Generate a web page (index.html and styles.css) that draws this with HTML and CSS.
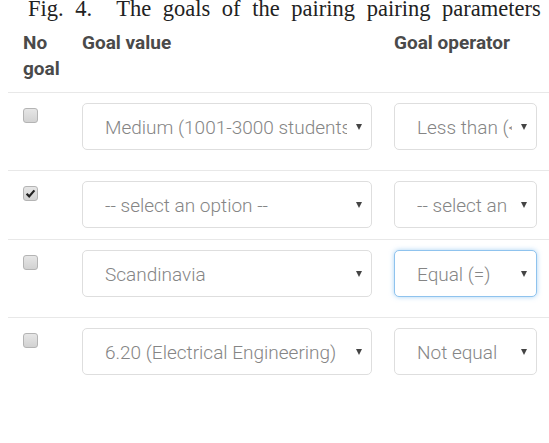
FILE: index.html
```html
<!DOCTYPE html>
<html lang="en">
<head>
    <meta charset="UTF-8">
    <meta name="viewport" content="width=device-width, initial-scale=1.0">
    <title>Goals</title>
    <link rel="stylesheet" href="styles.css">
</head>
<body>
    <p class="caption"><span class="fig">Fig. 4.</span>The goals of the pairing pairing parameters</p>

    <div class="goals">
        <div class="goal-row head">
            <div>No goal</div>
            <div>Goal value</div>
            <div>Goal operator</div>
        </div>

        <div class="goal-row spaced">
            <span class="check"></span>
            <div class="select"><span class="value">Medium (1001-3000 students)</span><span class="arrow"></span></div>
            <div class="select"><span class="value">Less than (&lt;)</span><span class="arrow"></span></div>
        </div>

        <div class="goal-row">
            <span class="check checked">
                <svg viewBox="0 0 15 15" width="15" height="15"><path d="M3.6 7.8 L6.2 10.4 L11.4 4.4" fill="none" stroke="#222" stroke-width="2.2"/></svg>
            </span>
            <div class="select"><span class="value">-- select an option --</span><span class="arrow"></span></div>
            <div class="select"><span class="value">-- select an option --</span><span class="arrow"></span></div>
        </div>

        <div class="goal-row spaced">
            <span class="check"></span>
            <div class="select"><span class="value">Scandinavia</span><span class="arrow"></span></div>
            <div class="select focus"><span class="value">Equal (=)</span><span class="arrow"></span></div>
        </div>

        <div class="goal-row">
            <span class="check"></span>
            <div class="select"><span class="value">6.20 (Electrical Engineering)</span><span class="arrow"></span></div>
            <div class="select"><span class="value">Not equal</span><span class="arrow"></span></div>
        </div>
    </div>
</body>
</html>
```

FILE: styles.css
```css
body {
    margin: 0 0 0 8px;
    background-color: #fff;
    overflow: hidden;
}

.caption {
    margin: 0 0 0 20px;
    font-family: 'Liberation Serif', 'Times New Roman', serif;
    font-size: 22.5px;
    line-height: 18px;
    word-spacing: 6px;
    color: #222;
    white-space: nowrap;
}

.fig {
    margin-right: 24px;
}

.goals {
    margin-top: 12px;
    font-family: Roboto, 'Liberation Sans', sans-serif;
}

.goal-row {
    display: grid;
    grid-template-columns: 37px 290px 143px;
    column-gap: 22px;
    align-items: start;
    padding: 10px 0 11px 15px;
    border-top: 1px solid #e8e8e8;
}

.goal-row.spaced {
    padding-bottom: 20px;
}

.goal-row.head {
    padding-top: 0;
    padding-bottom: 10px;
    border-top: none;
    font-size: 19px;
    font-weight: bold;
    line-height: 26px;
    color: #4a4a4a;
}

.check {
    display: block;
    width: 15px;
    height: 15px;
    margin-top: 5px;
    box-sizing: border-box;
    border: 1px solid #b4b4b4;
    border-radius: 3px;
    background: linear-gradient(#e6e6e6, #d2d2d2);
}

.check svg {
    display: block;
    margin: -1px;
}

.select {
    display: flex;
    align-items: center;
    height: 47px;
    box-sizing: border-box;
    padding-left: 22px;
    border: 1px solid #dedede;
    border-radius: 5px;
    background-color: #fff;
}

.select.focus {
    border-color: #8fc3ee;
    box-shadow: 0 0 5px rgba(102, 175, 233, 0.55);
}

.value {
    flex: 1;
    overflow: hidden;
    white-space: nowrap;
    padding-top: 2px;
    font-size: 19px;
    font-weight: 300;
    color: #858585;
}

.arrow {
    width: 0;
    height: 0;
    margin: 0 9px 0 9px;
    border-left: 3.5px solid transparent;
    border-right: 3.5px solid transparent;
    border-top: 6px solid #444;
}
```
